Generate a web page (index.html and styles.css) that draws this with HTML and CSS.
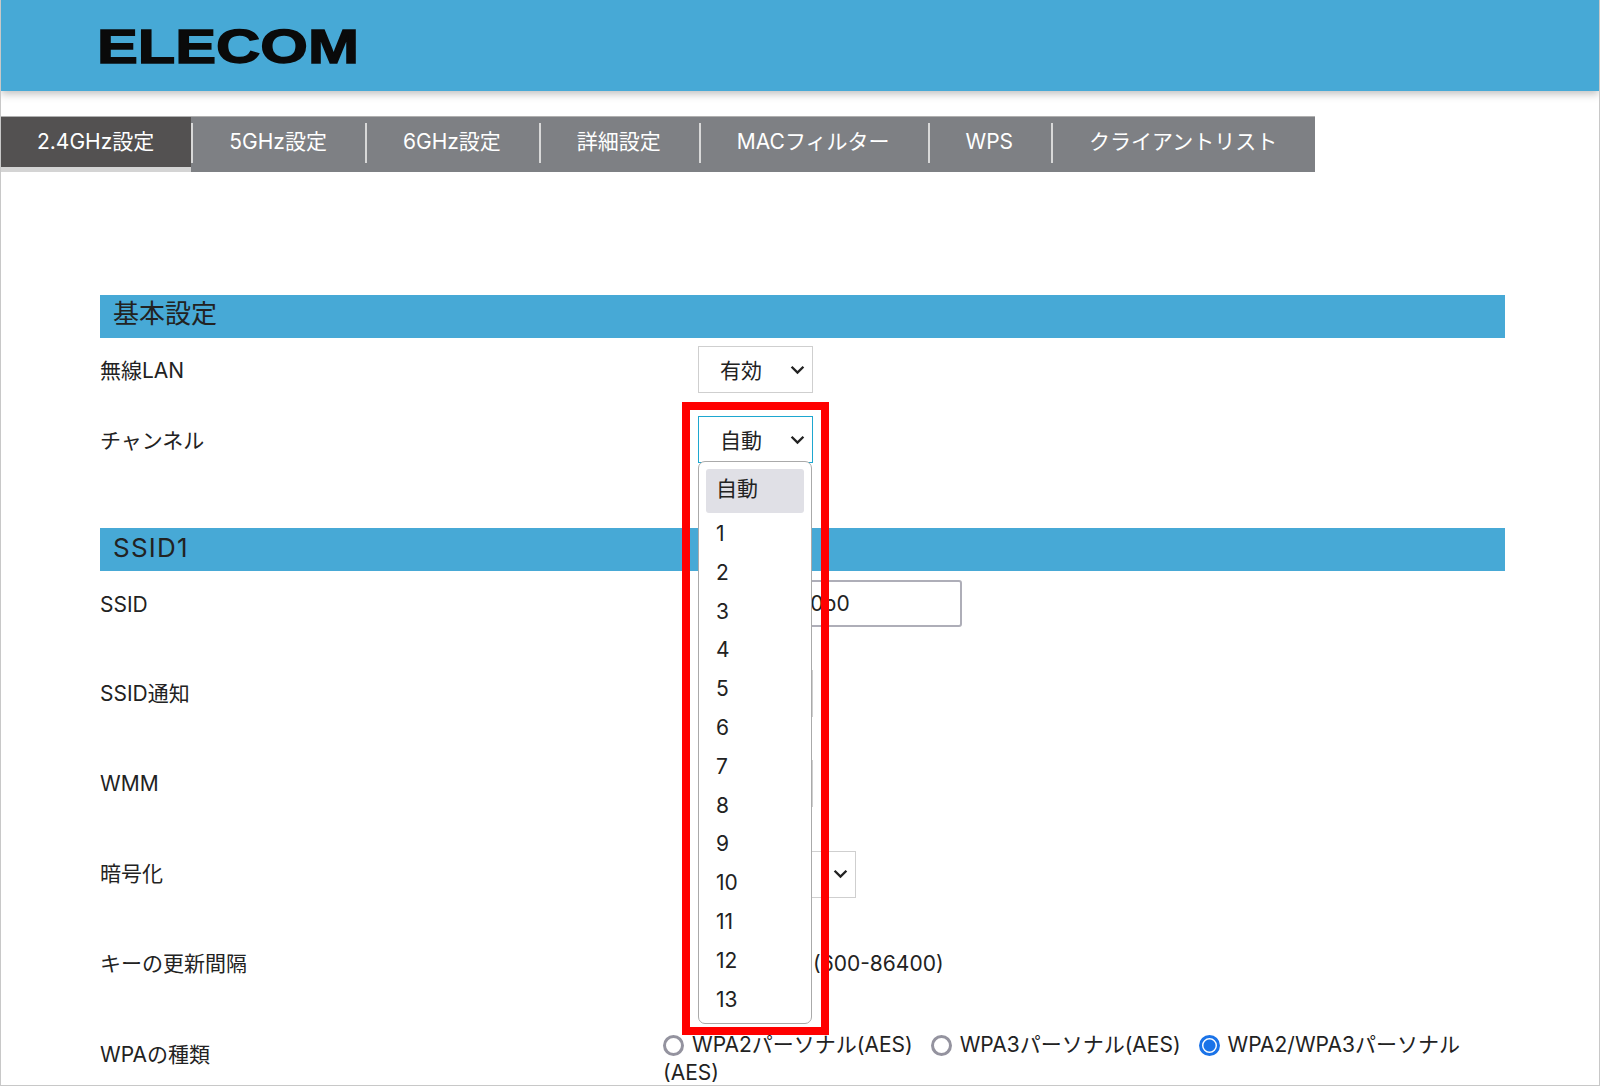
FILE: index.html
```html
<!DOCTYPE html>
<html lang="ja">
  <head>
    <meta charset="UTF-8" />
    <title>ELECOM 無線設定</title>
    <link rel="stylesheet" href="styles.css">
  </head>
  <body>
    <div class="page">
      <header class="topbar">
        <svg class="logo" width="266" height="60" viewBox="0 0 266 60" role="img" aria-label="ELECOM">
          <text x="0" y="48" textLength="262" lengthAdjust="spacingAndGlyphs">ELECOM</text>
        </svg>
      </header>

      <nav class="tabs">
        <a class="tab active">2.4GHz設定</a>
        <a class="tab">5GHz設定</a>
        <a class="tab">6GHz設定</a>
        <a class="tab">詳細設定</a>
        <a class="tab">MACフィルター</a>
        <a class="tab">WPS</a>
        <a class="tab">クライアントリスト</a>
      </nav>

      <main class="content">
        <h2 class="section-title">基本設定</h2>
        <div class="row row-basic">
          <label>無線LAN</label>
          <div class="select"><span>有効</span><svg class="chevron" viewBox="0 0 14 9"><path d="M1.5 1.5 7 7l5.5-5.5" /></svg></div>
        </div>
        <div class="row row-basic">
          <label>チャンネル</label>
          <div class="select focused"><span>自動</span><svg class="chevron" viewBox="0 0 14 9"><path d="M1.5 1.5 7 7l5.5-5.5" /></svg></div>
        </div>

        <h2 class="section-title second">SSID1</h2>
        <div class="row row-ssid">
          <label>SSID</label>
          <input class="text-input" type="text" value="elecom650b0" />
        </div>
        <div class="row row-wide">
          <label>SSID通知</label>
          <div class="select"><span>有効</span><svg class="chevron" viewBox="0 0 14 9"><path d="M1.5 1.5 7 7l5.5-5.5" /></svg></div>
        </div>
        <div class="row row-wide">
          <label>WMM</label>
          <div class="select"><span>有効</span><svg class="chevron" viewBox="0 0 14 9"><path d="M1.5 1.5 7 7l5.5-5.5" /></svg></div>
        </div>
        <div class="row row-wide">
          <label>暗号化</label>
          <div class="select wide"><span>WPA</span><svg class="chevron" viewBox="0 0 14 9"><path d="M1.5 1.5 7 7l5.5-5.5" /></svg></div>
        </div>
        <div class="row row-wide">
          <label>キーの更新間隔</label>
          <div class="interval"><input class="text-input short" type="text" value="3600" /><span>(600-86400)</span></div>
        </div>
        <div class="row row-radio">
          <label>WPAの種類</label>
          <div class="radios">
            <span class="radio-item"><i class="radio"></i>WPA2パーソナル(AES)</span>
            <span class="radio-item"><i class="radio"></i>WPA3パーソナル(AES)</span>
            <span class="radio-item"><i class="radio on"></i>WPA2/WPA3パーソナル</span>
            <span class="radio-tail">(AES)</span>
          </div>
        </div>
      </main>

      <!-- open select list and the red callout sit over the form -->
      <ul class="dropdown">
        <li class="current">自動</li>
        <li>1</li>
        <li>2</li>
        <li>3</li>
        <li>4</li>
        <li>5</li>
        <li>6</li>
        <li>7</li>
        <li>8</li>
        <li>9</li>
        <li>10</li>
        <li>11</li>
        <li>12</li>
        <li>13</li>
      </ul>
      <div class="callout"></div>
    </div>
  </body>
</html>
```

FILE: styles.css
```css
html,
body {
  margin: 0;
  padding: 0;
  background: #fff;
}

body {
  font-family: Inter, "Noto Sans CJK JP", sans-serif;
  font-size: 21px;
  color: #222;
}

.page {
  position: relative;
  height: 1086px;
  box-sizing: border-box;
  overflow: hidden;
  border-left: 1px solid #c8c8c8;
  border-right: 1px solid #c8c8c8;
  border-bottom: 1px solid #c8c8c8;
}

.topbar {
  height: 91px;
  background: #47a9d6;
  box-shadow: 0 3px 8px rgba(0, 0, 0, 0.25);
  padding: 15px 0 0 96px;
  box-sizing: border-box;
}

.logo {
  display: block;
}

.logo text {
  font-family: "Liberation Sans", sans-serif;
  font-weight: 700;
  font-size: 49px;
  fill: #0a0a0a;
  stroke: #0a0a0a;
  stroke-width: 1.4px;
}

.tabs {
  display: inline-flex;
  margin-top: 25px;
  height: 56px;
  background: #7e8084;
  border-top: 1px solid #b0b0b0;
  box-sizing: border-box;
  vertical-align: top;
}

.tab {
  display: block;
  position: relative;
  height: 50px;
  padding: 0 38px;
  box-sizing: border-box;
  font-size: 21px;
  line-height: 50px;
  color: #fff;
  white-space: nowrap;
}

.tab + .tab::before {
  content: "";
  position: absolute;
  left: 0;
  top: 6px;
  bottom: 4px;
  width: 2px;
  background: #d8d8d8;
}

.tab.active {
  background: #535151;
  padding: 0 37px 0 36px;
}

.tab.active::after {
  content: "";
  position: absolute;
  left: 0;
  right: 0;
  top: 50px;
  height: 5px;
  background: #d4d4d4;
}

.content {
  padding: 123px 94px 0 99px;
}

.section-title {
  margin: 0;
  height: 43px;
  padding-left: 13px;
  background: #47a9d6;
  font-size: 26px;
  font-weight: 400;
  line-height: 38px;
  color: #222;
}

.section-title.second {
  margin-top: 65px;
  line-height: 40px;
  letter-spacing: 1.2px;
}

.row {
  display: grid;
  grid-template-columns: 598px 1fr;
  align-items: center;
}

.row label {
  line-height: 28px;
  padding-top: 2px;
}

.row-basic {
  height: 47px;
  margin-top: 23px;
}

.section-title + .row-basic {
  margin-top: 8px;
}

.row-ssid {
  height: 47px;
  margin-top: 9px;
}

.row-wide {
  height: 90px;
}

.row-ssid + .row-wide {
  margin-top: 21px;
}

.select {
  display: flex;
  align-items: center;
  width: 115px;
  height: 47px;
  box-sizing: border-box;
  border: 1px solid #cfcfcf;
  padding: 0 7px 2px 21px;
  justify-content: space-between;
  background: #fff;
}

.select.wide {
  width: 158px;
  margin-top: 2px;
}

.select.focused {
  border-color: #1ea7d0;
}

.chevron {
  width: 15px;
  height: 10px;
  margin-top: 2px;
  fill: none;
  stroke: #222;
  stroke-width: 2.2;
}

.text-input {
  width: 264px;
  height: 47px;
  box-sizing: border-box;
  padding: 0 12px;
  border: 2px solid #aeaeb8;
  border-radius: 3px;
  font-family: inherit;
  font-size: 21px;
  color: #222;
}

.text-input.short {
  width: 110px;
}

.interval {
  display: flex;
  align-items: center;
  gap: 5px;
}

.row-radio {
  align-items: start;
  margin-top: 23px;
}

.row-radio label {
  padding-top: 10px;
}

.radios {
  margin-left: -35px;
  line-height: 27.5px;
  width: 830px;
}

.radio-item {
  margin-right: 12px;
  white-space: nowrap;
}

.radio {
  display: inline-block;
  width: 21px;
  height: 21px;
  box-sizing: border-box;
  border: 3px solid #94939f;
  border-radius: 50%;
  margin-right: 8px;
  vertical-align: -4px;
}

.radio.on {
  border-color: #1a73e8;
  background: radial-gradient(circle, #1a73e8 0 5.5px, #fff 6.5px);
}

.radio-tail {
  display: block;
}

.dropdown {
  position: absolute;
  left: 697px;
  top: 461px;
  width: 114px;
  height: 563px;
  margin: 0;
  padding: 7px;
  list-style: none;
  box-sizing: border-box;
  background: #fff;
  border: 1px solid #aaa;
  border-radius: 7px;
}

.dropdown li {
  height: 38.8px;
  line-height: 38.8px;
  padding-left: 10px;
}

.dropdown li.current {
  height: 44px;
  line-height: 40px;
  background: #e0e0e6;
  border-radius: 3px;
  margin-bottom: 2px;
}

.callout {
  position: absolute;
  left: 681px;
  top: 402px;
  width: 147px;
  height: 633px;
  box-sizing: border-box;
  border: 8px solid #f00;
}
```
